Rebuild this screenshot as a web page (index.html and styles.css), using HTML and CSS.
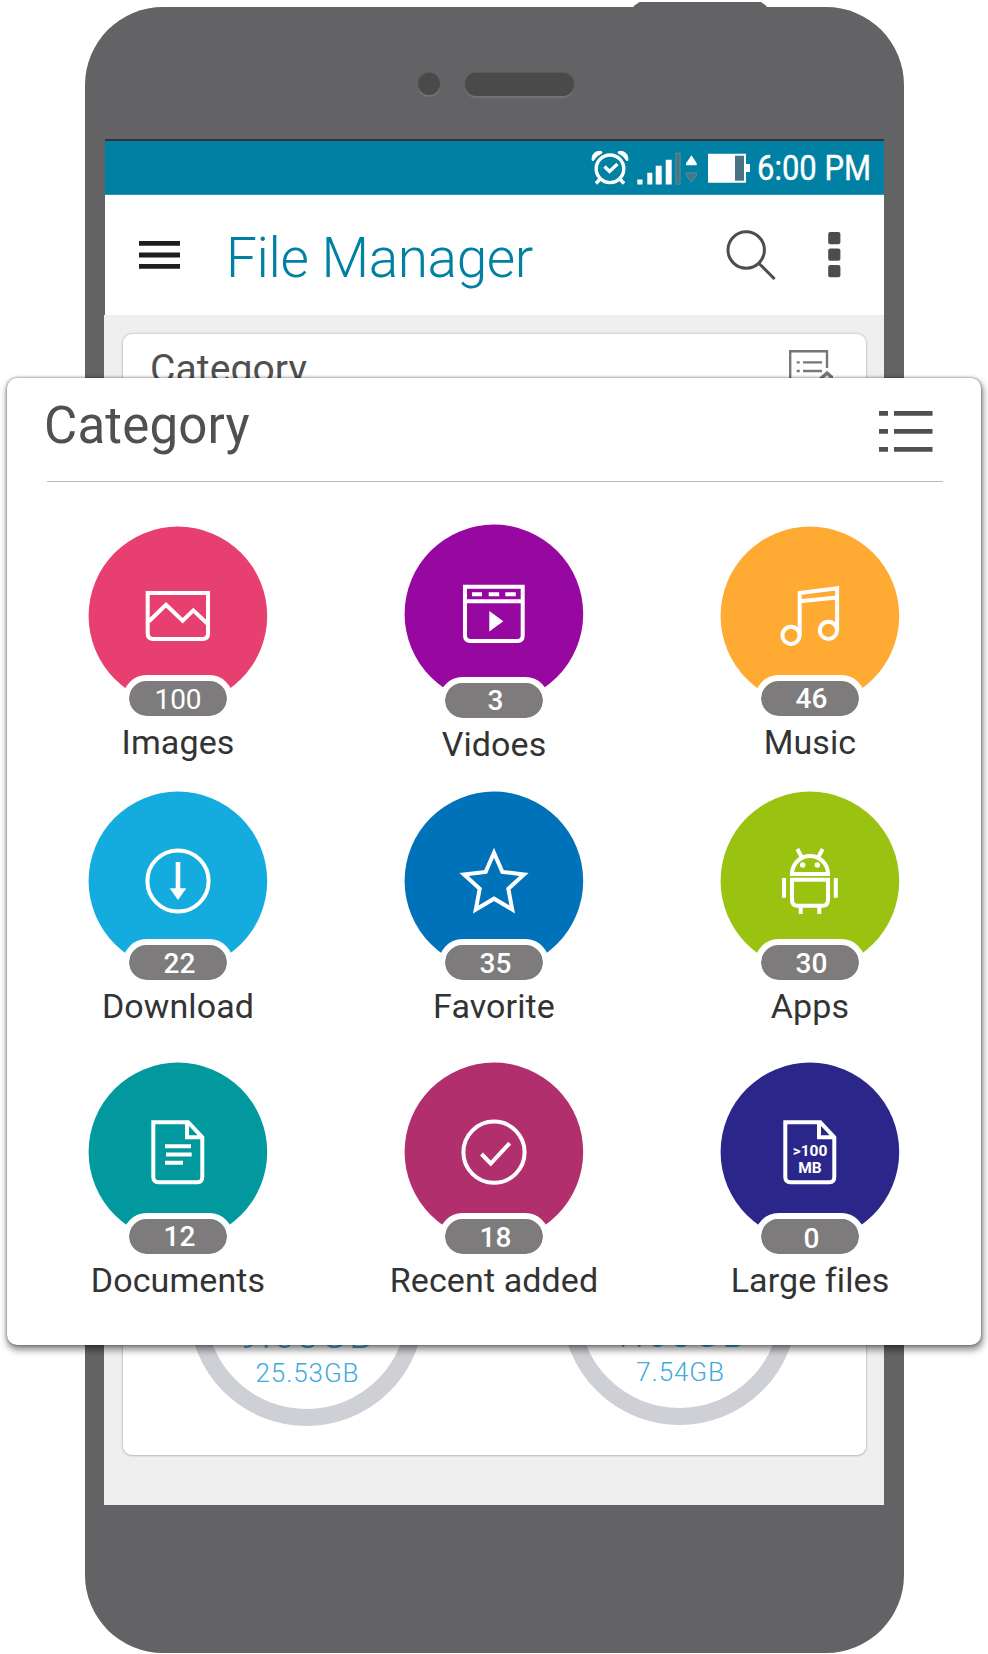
FILE: index.html
```html
<!DOCTYPE html>
<html lang="en">
<head>
<meta charset="utf-8">
<title>File Manager</title>
<link rel="stylesheet" href="styles.css">
</head>
<body>
<main class="stage">
  <svg class="power-button" viewBox="0 0 134 6"><path d="M.7 6V4L6.500 0H128L133.500 4V6Z" fill="#636365"/></svg>
  <div class="phone">
    <div class="earpiece"><span class="sensor"></span><span class="speaker"></span></div>
    <div class="screen">
      <header class="status-bar">
        <svg class="status-icons" viewBox="580 141 304 54">
          <g fill="none" stroke="#fff" stroke-width="3.400">
            <circle cx="610" cy="168.800" r="13.800"/>
            <path d="M604.500 166.500l5 5 8-7.500M600.500 178.500l-4.500 5M619.500 178.500l4.500 5"/>
          </g>
          <path d="M592.200 160.500C591.500 154.500 595 150.500 601.500 151.500L602 153Q596 155.500 593.500 160.500ZM627.800 160.500C628.500 154.500 625 150.500 618.500 151.500L618 153Q624 155.500 626.500 160.500Z" fill="#fff" stroke="#fff"/>
          <path d="M637.300 179.500h5.200v5h-5.200zM647.300 172.700h5v11.800h-5zM655.700 165.700h6v18.800h-6zM665.700 159.700h6v24.800h-6zM691.500 155.300l5.200 8v2h-10.700v-2z" fill="#fff"/>
          <path d="M675.900 153.200h4.200v31h-4.200zM686.300 173h10.200v2l-5 7-5.200-7z" fill="#477482" stroke="#6f9ba7" stroke-width=".7"/>
          <path d="M708 153.700h38v10.300h4v8h-4v10.700h-38z" fill="#fff"/>
          <path d="M735 155.700h9v25h-9z" fill="#477482"/>
          <text class="clock" x="757" y="180" textLength="114" lengthAdjust="spacingAndGlyphs">6:00 PM</text>
        </svg>
      </header>
      <div class="app-bar">
        <svg class="menu-icon" viewBox="0 0 41 28"><path d="M0 0h41v4.700H0zM0 11.600h41v4.800H0zM0 23h41v4.700H0z" fill="#1e1e1e"/></svg>
        <h1 class="app-title">File Manager</h1>
        <svg class="search-icon" viewBox="0 0 50 52"><g fill="none" stroke="#4d4d4d" stroke-width="3"><circle cx="20.200" cy="21" r="18.200"/><path d="M33 34.500L48.600 50"/></g></svg>
        <svg class="more-icon" viewBox="0 0 13 46"><g fill="#4d4d4d"><rect x=".2" width="12.200" height="12.200" rx="2"/><rect x=".2" y="16.600" width="12.200" height="12.200" rx="2"/><rect x=".2" y="33" width="12.200" height="12.200" rx="2"/></g></svg>
      </div>
      <section class="content">
        <div class="back-card">
          <div class="back-head">
            <h2 class="back-title">Category</h2>
            <svg class="back-icon" viewBox="0 0 44 44"><g fill="none" stroke="#777" stroke-width="2.400"><path d="M1.200 40V1.200H38V18M7.700 12.400h3M14 12.400h19M7.700 21h3M14 21h19"/><path d="M28 32l10-9 10 9" stroke-width="3.500"/></g></svg>
          </div>
          <div class="storage">
            <div class="ring"><span class="used">9.68GB</span><span class="total">25.53GB</span></div>
            <div class="ring ring-sd"><span class="used">1.68GB</span><span class="total">7.54GB</span></div>
          </div>
        </div>
      </section>
    </div>
  </div>

  <section class="panel">
    <header class="panel-head">
      <h2 class="panel-title">Category</h2>
      <svg class="list-icon" viewBox="0 0 54 41"><path d="M0 0h9v4.700H0zM15 0h38.500v4.700H15zM0 18h9v4.700H0zM15 18h38.500v4.700H15zM0 36h9v4.700H0zM15 36h38.500v4.700H15z" fill="#505050"/></svg>
    </header>
    <div class="grid">
      <div class="tile images">
        <svg class="disc" viewBox="-.5 -.5 180 180"><circle class="base" cx="89.400" cy="89.400" r="89.300"/><path d="M59.200 66.500H119.500V107Q119.500 112.500 114 112.500H65Q59.200 112.500 59.200 107ZM60.500 94.800L77.500 78.200 94.200 94.200 104.800 83.900 119 97.300"/></svg>
        <span class="badge regular">100</span><span class="label">Images</span>
      </div>
      <div class="tile videos">
        <svg class="disc" viewBox="-.5 -.5 180 180"><circle class="base" cx="89.400" cy="89.400" r="89.300"/><path d="M60.500 62.300H118.200V111Q118.200 116.400 113 116.400H66Q60.500 116.400 60.500 111ZM60.500 76.700H118.200M67.500 69.700h10M84.200 69.700h10.500M100.800 69.700h10.500"/><path class="solid" d="M84.800 86.400L98.800 96.700 84.800 107Z"/></svg>
        <span class="badge">3</span><span class="label">Vidoes</span>
      </div>
      <div class="tile music">
        <svg class="disc" viewBox="-.5 -.5 180 180"><circle class="base" cx="89.400" cy="89.400" r="89.300"/><path d="M79.200 108.800V66.400L116.600 61.700V103.800M79.200 74.800L116.600 71"/><circle cx="70.500" cy="108.800" r="8.600"/><circle cx="107.900" cy="103.800" r="8.600"/></svg>
        <span class="badge up">46</span><span class="label">Music</span>
      </div>
      <div class="tile download">
        <svg class="disc" viewBox="-.5 -.5 180 180"><circle class="base" cx="89.400" cy="89.400" r="89.300"/><circle cx="89.500" cy="89.500" r="30.600"/><path d="M89.500 70.500V98" stroke-width="4.600"/><path class="solid" d="M81.200 96.800H97.800L89.500 108.500Z"/></svg>
        <span class="badge">22</span><span class="label">Download</span>
      </div>
      <div class="tile favorite">
        <svg class="disc" viewBox="-.5 -.5 180 180"><circle class="base" cx="89.400" cy="89.400" r="89.300"/><path d="M89.500 61.200L97.800 80.400 119.500 83 103.800 97.200 107.700 118 89.500 107.200 71.300 118 75.200 97.200 59.500 83 81.200 80.400Z"/></svg>
        <span class="badge">35</span><span class="label">Favorite</span>
      </div>
      <div class="tile apps">
        <svg class="disc" viewBox="-.5 -.5 180 180"><circle class="base" cx="89.400" cy="89.400" r="89.300"/><path d="M71.500 82.500A18 18 0 0 1 107.500 82.500ZM76.800 57.500L81 65.200M102.200 57.500L98 65.200M71.500 88.200H107.500V108.500Q107.500 114.200 102 114.200H77Q71.500 114.200 71.500 108.500ZM63.500 86.500V106.200M115.300 86.500V106.200M80.200 114V122.500M98.800 114V122.500"/><circle class="solid" cx="82.200" cy="73.500" r="2.700"/><circle class="solid" cx="96.800" cy="73.500" r="2.700"/></svg>
        <span class="badge">30</span><span class="label">Apps</span>
      </div>
      <div class="tile documents">
        <svg class="disc" viewBox="-.5 -.5 180 180"><circle class="base" cx="89.400" cy="89.400" r="89.300"/><path d="M64.800 59.700H99.700L113.800 74.800V114.500Q113.800 119.700 109 119.700H70Q64.800 119.700 64.800 114.500ZM98.500 60V74.700H113.800M76.500 83.700H102.500M77.500 92H103.200M76.500 100.300H94.500"/></svg>
        <span class="badge up">12</span><span class="label">Documents</span>
      </div>
      <div class="tile recent">
        <svg class="disc" viewBox="-.5 -.5 180 180"><circle class="base" cx="89.400" cy="89.400" r="89.300"/><circle cx="89.500" cy="89.700" r="30.600"/><path d="M77 91.500L86.200 101 105.200 80.700"/></svg>
        <span class="badge">18</span><span class="label">Recent added</span>
      </div>
      <div class="tile large">
        <svg class="disc" viewBox="-.5 -.5 180 180"><circle class="base" cx="89.400" cy="89.400" r="89.300"/><path d="M64.800 59.700H99.700L113.800 74.800V114.500Q113.800 119.700 109 119.700H70Q64.800 119.700 64.800 114.500ZM98.500 60V74.700H113.800"/><text class="size" x="89.500" y="93.700">&gt;100</text><text class="size" x="89.500" y="110.400">MB</text></svg>
        <span class="badge down">0</span><span class="label">Large files</span>
      </div>
    </div>
  </section>
</main>
</body>
</html>
```
FILE: styles.css
```css
* { box-sizing: border-box; }
body { margin: 0; background: #fff; font-family: Roboto, "Liberation Sans", sans-serif; }
h1, h2 { margin: 0; white-space: nowrap; }
svg { display: block; flex: none; }

.stage { position: relative; width: 988px; height: 1654px; padding: 7px 84px 0 85px; overflow: hidden; }
.power-button { position: absolute; left: 633px; top: 2px; width: 134px; height: 6px; }
.phone { height: 1646px; padding: 0 20px; border-radius: 78px; background: #636365; }

.earpiece { height: 132px; padding: 66px 0 0 313px; display: flex; gap: 25px; }
.sensor { width: 22px; height: 22px; border-radius: 50%; background: #4a4a4a; box-shadow: 0 2px 1px #747476, 0 -1px 1px #58585a; }
.speaker { width: 109px; height: 23px; border-radius: 11px; background: #4a4a4a; box-shadow: 0 2px 1px #747476, 0 -1px 1px #58585a; }

.screen { width: 779px; height: 1366px; border-top: 2px solid #303438; display: flex; flex-direction: column; }
.status-bar { height: 54px; background: #0080a2; border-bottom: 1px solid #2c95b2; display: flex; justify-content: flex-end; }
.status-icons { width: 304px; height: 54px; }
.clock { font-size: 34.500px; fill: #fff; stroke: #fff; stroke-width: .4; }

.app-bar { height: 120px; padding: 0 43px 0 34px; background: #fff; display: flex; align-items: flex-start; }
.menu-icon { width: 41px; height: 28px; margin-top: 46px; }
.app-title { margin: 25px 0 0 46px; font-size: 55px; line-height: 76px; font-weight: 300; letter-spacing: -.4px; color: #0080a2; }
.search-icon { width: 50px; height: 52px; margin: 34px 0 0 auto; }
.more-icon { width: 13px; height: 46px; margin: 37px 0 0 52px; }

.content { height: 1190px; margin-left: -1px; padding: 19px 18px 50px 19px; background: #efefef; }
.back-card { height: 1121px; border-radius: 9px; background: #fff; box-shadow: 0 0 2px 1px rgba(0,0,0,.13), 0 1px 2px rgba(0,0,0,.12); display: flex; flex-direction: column; justify-content: space-between; }
.back-head { display: flex; justify-content: space-between; padding: 11px 33px 0 27px; }
.back-title { margin-top: -1px; font-size: 39px; line-height: 50px; font-weight: 400; letter-spacing: .1px; color: #505050; }
.back-icon { width: 44px; height: 44px; margin-top: 5px; }
.storage { display: flex; padding: 0 0 29px 66px; gap: 138px; }
.ring { width: 235px; height: 235px; border: 17px solid #cfd0d5; border-radius: 50%; display: flex; flex-direction: column; align-items: center; padding-top: 104px; color: #3fa9e0; }
.ring-sd { margin-top: -1px; margin-bottom: 1px; }
.used { font-size: 38px; line-height: 46px; font-weight: 300; letter-spacing: 2.500px; }
.total { font-size: 26px; line-height: 32px; font-weight: 300; letter-spacing: .9px; margin-top: -1px; padding-left: 2px; }

.panel { position: absolute; left: 7px; top: 378px; width: 974px; height: 967px; padding: 0 38px 0 13px; border-radius: 10px; background: #fff; box-shadow: 0 0 3px rgba(0,0,0,.5), 1px 4px 7px 1px rgba(0,0,0,.45); }
.panel-head { height: 104px; margin-left: 27px; padding-right: 10px; border-bottom: 1px solid #bababa; display: flex; justify-content: space-between; align-items: flex-start; }
.panel-title { margin-top: 18px; margin-left: -3px; font-size: 51px; line-height: 60px; font-weight: 400; letter-spacing: .2px; color: #505050; }
.list-icon { width: 54px; height: 41px; margin-top: 33px; }

.grid { display: grid; grid-template-columns: repeat(3, 316px); grid-template-rows: 265px 271px 230px; padding-top: 44px; }
.tile { display: flex; flex-direction: column; align-items: center; }
.disc { width: 180px; height: 180px; fill: none; stroke: #fff; stroke-width: 4; }
.base { stroke: none; }
.solid { fill: #fff; stroke: none; }
.size { fill: #fff; stroke: none; font-size: 15.500px; font-weight: 700; text-anchor: middle; }
.badge { z-index: 1; width: 110px; height: 47px; margin-top: -31px; border: 6px solid #fff; border-radius: 24px; background: #7e7b7c; background-clip: padding-box; color: #fff; font-size: 28px; line-height: 37px; font-weight: 500; text-align: center; padding-left: 3px; }
.regular { font-weight: 400; padding-left: 0; }
.up { line-height: 35px; }
.down { line-height: 39px; }
.label { font-size: 34px; line-height: 40px; letter-spacing: .1px; color: #333; white-space: nowrap; }

.images .base { fill: #e73f70; }
.videos { margin-top: -2px; }
.videos .base { fill: #96089f; }
.videos .badge { margin-top: -27px; line-height: 36px; }
.music .base { fill: #ffaa32; }
.download .base { fill: #14acdf; }
.favorite .base { fill: #0072ba; }
.apps .base { fill: #99c211; }
.download .badge, .favorite .badge, .apps .badge { margin-top: -32px; }
.documents .base { fill: #02999e; }
.recent .base { fill: #b02f6c; }
.large .base { fill: #2b268a; }
.documents .badge, .recent .badge, .large .badge { margin-top: -29px; }
```
